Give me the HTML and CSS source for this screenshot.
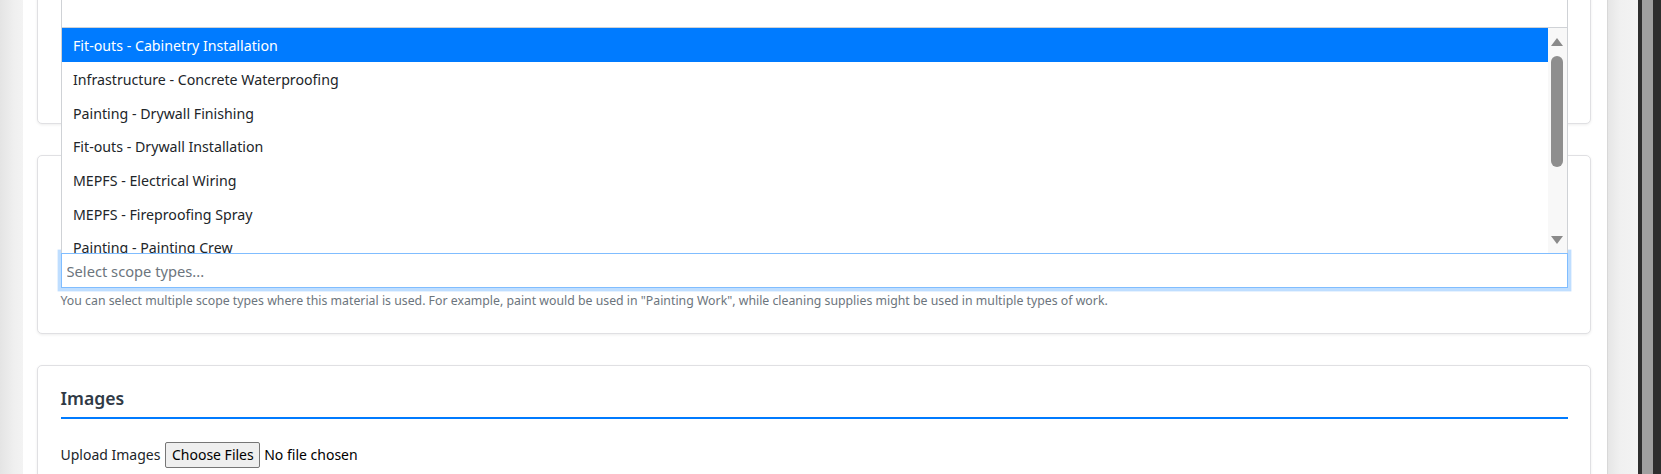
FILE: index.html
```html
<!DOCTYPE html>
<html lang="en">
<head>
<meta charset="utf-8">
<title>Material form</title>
<link rel="stylesheet" href="styles.css">
</head>
<body>
<div class="app">
  <div class="side-shadow"></div>
  <main class="content">
    <section class="card card-clipped"></section>

    <section class="card">
      <div class="scope-field">
        <div class="select-wrap">
          <div class="dropdown">
            <div class="dropdown-head"></div>
            <div class="dropdown-body">
              <ul class="options">
                <li class="option is-active">Fit-outs - Cabinetry Installation</li>
                <li class="option">Infrastructure - Concrete Waterproofing</li>
                <li class="option">Painting - Drywall Finishing</li>
                <li class="option">Fit-outs - Drywall Installation</li>
                <li class="option">MEPFS - Electrical Wiring</li>
                <li class="option">MEPFS - Fireproofing Spray</li>
                <li class="option">Painting - Painting Crew</li>
              </ul>
              <div class="vscroll">
                <span class="arrow arrow-up"></span>
                <span class="thumb"></span>
                <span class="vscroll-space"></span>
                <span class="arrow arrow-down"></span>
              </div>
            </div>
          </div>
          <input class="select-input" type="text" placeholder="Select scope types...">
        </div>
        <p class="help">You can select multiple scope types where this material is used. For example, paint would be used in "Painting Work", while cleaning supplies might be used in multiple types of work.</p>
      </div>
    </section>

    <section class="card">
      <h5 class="card-title">Images</h5>
      <div class="upload">
        <span class="upload-label">Upload Images</span>
        <button class="file-btn" type="button">Choose Files</button>
        <span class="file-name">No file chosen</span>
      </div>
    </section>
  </main>
  <div class="right-gutter"></div>
  <div class="win-scrollbar"><div class="win-thumb"></div></div>
</div>
</body>
</html>
```

FILE: styles.css
```css
html, body {
  margin: 0;
  padding: 0;
  height: 474px;
  overflow: hidden;
  background: #ffffff;
}

body {
  font-family: "Noto Sans", "Open Sans", sans-serif;
  color: #212529;
}

.app {
  display: flex;
  height: 474px;
}

.side-shadow {
  width: 23px;
  flex: none;
  background: linear-gradient(to right, #e4e4e4, #efefef 60%, #f3f3f3);
}

.content {
  flex: 1;
  display: flex;
  flex-direction: column;
  gap: 31px;
  padding: 0 16px 0 14px;
  background: #ffffff;
  min-width: 0;
}

.card {
  flex: none;
  background: #ffffff;
  border: 1px solid #e0e0e3;
  border-radius: 5px;
  box-shadow: 0 1px 3px rgba(0, 0, 0, 0.07);
  padding: 22.5px;
}

.card-clipped {
  margin-top: -21px;
  height: 144.5px;
  box-sizing: border-box;
}

.scope-field {
  margin-top: 75.3px;
}

.select-wrap {
  position: relative;
}

.dropdown {
  position: absolute;
  left: 0;
  right: 0;
  bottom: 100%;
  z-index: 10;
  background: #ffffff;
  border: 1px solid #cfd2d6;
  border-bottom: none;
}

.dropdown-head {
  height: 50px;
}

.dropdown-body {
  display: flex;
  height: 225px;
  border-top: 1px solid #cfd2d6;
  overflow: hidden;
}

.options {
  list-style: none;
  margin: 0;
  padding: 0;
  flex: 1;
  min-width: 0;
}

.option {
  height: 33.7px;
  line-height: 35px;
  padding-left: 11.5px;
  font-size: 14.2px;
  color: #212529;
  white-space: nowrap;
}

.option.is-active {
  background: #007bff;
  color: #ffffff;
}

.vscroll {
  width: 18.5px;
  flex: none;
  background: #f8f8f8;
  display: flex;
  flex-direction: column;
  align-items: center;
  padding: 10px 0 9px;
  box-sizing: border-box;
}

.arrow {
  width: 0;
  height: 0;
  border-left: 6px solid transparent;
  border-right: 6px solid transparent;
}

.arrow-up {
  border-bottom: 8.4px solid #8a8a8a;
}

.arrow-down {
  border-top: 8.4px solid #8a8a8a;
}

.thumb {
  margin-top: 10px;
  width: 11.6px;
  height: 110.7px;
  border-radius: 6px;
  background: #8e8e8e;
}

.vscroll-space {
  flex: 1;
}

.select-input {
  display: block;
  width: 100%;
  box-sizing: border-box;
  height: 35px;
  margin: 0;
  padding: 0 6px 0 5px;
  border: 1px solid #80bdff;
  border-radius: 0;
  outline: none;
  box-shadow: 0 0 0 3.4px rgba(0, 123, 255, 0.25);
  font-family: inherit;
  font-size: 14.7px;
  color: #495057;
  background: #ffffff;
}

.select-input::placeholder {
  color: #6c757d;
  opacity: 1;
}

.help {
  margin: 2.7px 0 0;
  font-size: 12.3px;
  line-height: 20px;
  color: #6c757d;
  white-space: nowrap;
}

.card-title {
  margin: -1px 0 0;
  font-size: 17.6px;
  font-weight: 600;
  line-height: 20px;
  color: #303a46;
  padding-bottom: 9.5px;
  border-bottom: 2px solid #007bff;
}

.upload {
  display: flex;
  align-items: center;
  margin-top: 22.5px;
  font-size: 14px;
  color: #212529;
}

.upload-label {
  margin-right: 5px;
}

.file-btn {
  height: 26px;
  padding: 0 5.5px;
  margin: 0 4px 0 0;
  font-family: inherit;
  font-size: 14px;
  color: #000000;
  background: #efefef;
  border: 1px solid #767676;
  border-radius: 2px;
}

.file-name {
  color: #000000;
}

.right-gutter {
  width: 31px;
  flex: none;
  border-left: 1px solid #d8d8d8;
  box-sizing: border-box;
  background: linear-gradient(to right, #e6e6e6, #f0f0f0 40%, #f3f3f3);
}

.win-scrollbar {
  width: 23px;
  flex: none;
  background: #2e2e2e;
  padding-left: 4px;
  box-sizing: border-box;
}

.win-thumb {
  width: 11px;
  height: 100%;
  background: #a0a0a0;
}
```
